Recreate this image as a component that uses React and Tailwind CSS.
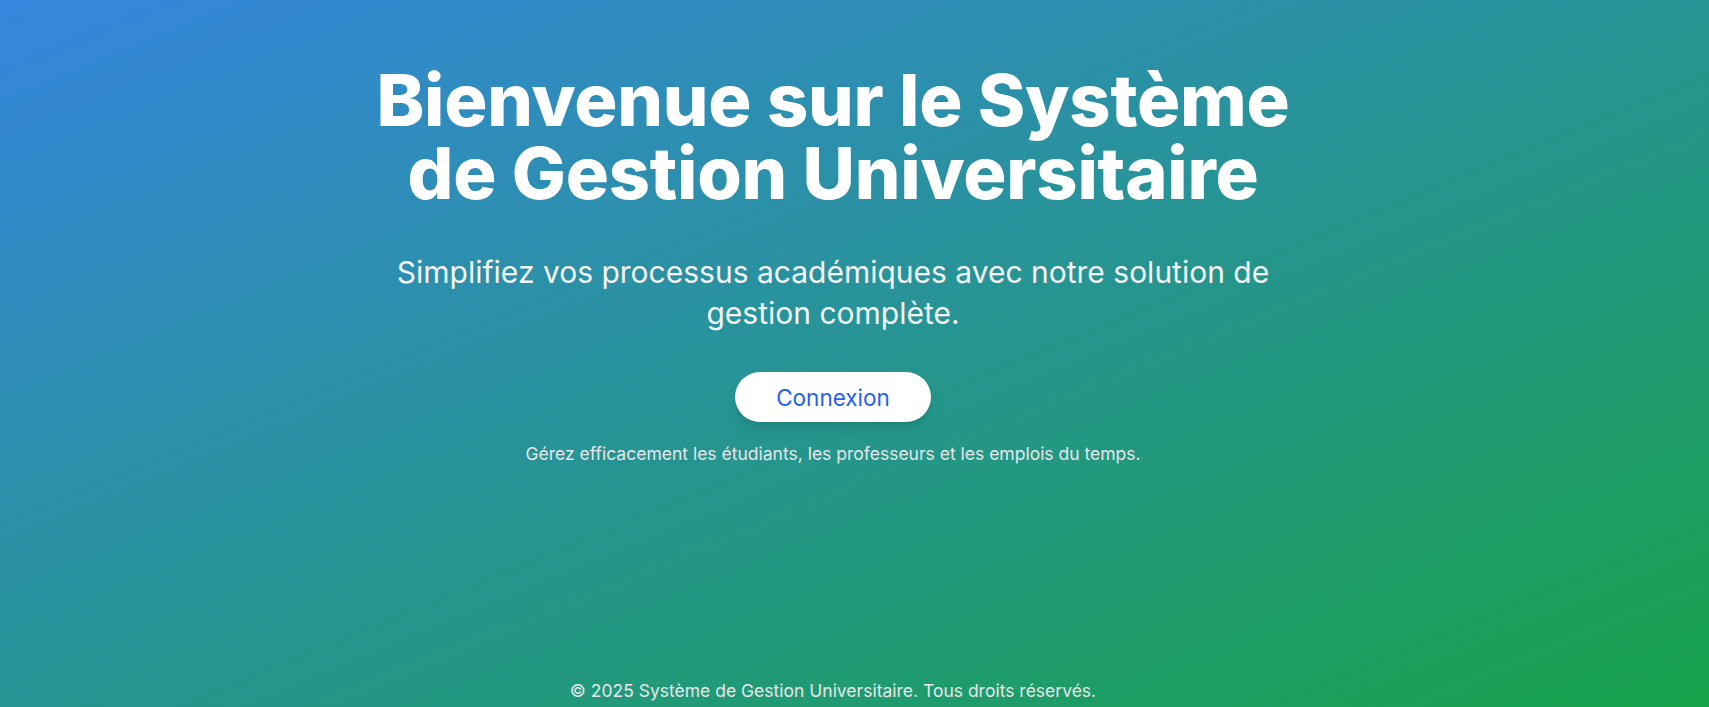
import React from "react";

const App = () => {
  return (
    <div className="h-screen flex flex-col pr-[43px] bg-linear-to-br/srgb from-[#3686de] to-[#17a24a] font-['Inter','Noto_Sans',sans-serif] text-white overflow-hidden">
      <main className="flex flex-col items-center text-center pt-[63px]">
        <h1 className="max-w-[960px] text-[72px] leading-[1.02] font-extrabold tracking-[-0.003em]">
          Bienvenue sur le Système de Gestion Universitaire
        </h1>
        <p className="mt-[42px] max-w-[900px] text-[30px] leading-snug text-gray-100">
          Simplifiez vos processus académiques avec notre solution de gestion
          complète.
        </p>
        <button className="mt-[38px] w-[196px] h-[50px] rounded-full bg-white text-[#2563eb] text-[22.5px] shadow-lg">
          Connexion
        </button>
        <p className="mt-[19px] text-[17.5px] leading-[26px] text-gray-200">
          Gérez efficacement les étudiants, les professeurs et les emplois du
          temps.
        </p>
      </main>
      <footer className="mt-auto pb-[3px] text-center text-[17.5px] leading-[26px] text-gray-200">
        © 2025 Système de Gestion Universitaire. Tous droits réservés.
      </footer>
    </div>
  );
};

export default App;
